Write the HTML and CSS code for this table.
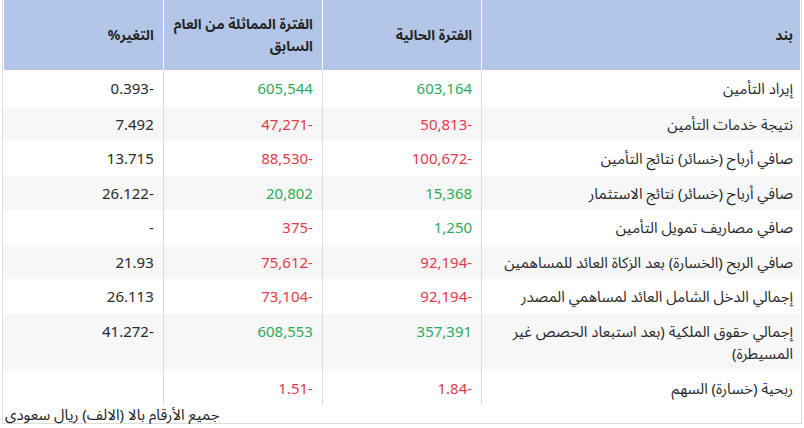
FILE: index.html
```html
<!DOCTYPE html>
<html lang="ar" dir="rtl">
<head>
<meta charset="utf-8">
<title>النتائج المالية</title>
<link rel="stylesheet" href="styles.css">
</head>
<body>
<div class="frame">
  <table class="fin">
    <colgroup>
      <col class="c-item">
      <col class="c-num">
      <col class="c-num">
      <col class="c-num">
    </colgroup>
    <thead>
      <tr>
        <th>بند</th>
        <th>الفترة الحالية</th>
        <th>الفترة المماثلة من العام<br>السابق</th>
        <th>التغير%</th>
      </tr>
    </thead>
    <tbody>
      <tr class="first">
        <td>إيراد التأمين</td>
        <td class="pos">603,164</td>
        <td class="pos">605,544</td>
        <td>-0.393</td>
      </tr>
      <tr>
        <td>نتيجة خدمات التأمين</td>
        <td class="neg">-50,813</td>
        <td class="neg">-47,271</td>
        <td>7.492</td>
      </tr>
      <tr>
        <td>صافي أرباح (خسائر) نتائج التأمين</td>
        <td class="neg">-100,672</td>
        <td class="neg">-88,530</td>
        <td>13.715</td>
      </tr>
      <tr>
        <td>صافي أرباح (خسائر) نتائج الاستثمار</td>
        <td class="pos">15,368</td>
        <td class="pos">20,802</td>
        <td>-26.122</td>
      </tr>
      <tr>
        <td>صافي مصاريف تمويل التأمين</td>
        <td class="pos">1,250</td>
        <td class="neg">-375</td>
        <td>-</td>
      </tr>
      <tr>
        <td>صافي الربح (الخسارة) بعد الزكاة العائد للمساهمين</td>
        <td class="neg">-92,194</td>
        <td class="neg">-75,612</td>
        <td>21.93</td>
      </tr>
      <tr>
        <td>إجمالي الدخل الشامل العائد لمساهمي المصدر</td>
        <td class="neg">-92,194</td>
        <td class="neg">-73,104</td>
        <td>26.113</td>
      </tr>
      <tr>
        <td>إجمالي حقوق الملكية (بعد استبعاد الحصص غير المسيطرة)</td>
        <td class="pos">357,391</td>
        <td class="pos">608,553</td>
        <td>-41.272</td>
      </tr>
      <tr>
        <td>ربحية (خسارة) السهم</td>
        <td class="neg">-1.84</td>
        <td class="neg">-1.51</td>
        <td></td>
      </tr>
    </tbody>
  </table>
  <p class="note">جميع الأرقام بالا (الالف) ريال سعودي</p>
</div>
</body>
</html>
```

FILE: styles.css
```css
html, body {
  margin: 0;
  padding: 0;
  background: #ffffff;
}

body {
  font-family: "Segoe UI", "Noto Sans", "Noto Sans Arabic", "DejaVu Sans", sans-serif;
  color: #2a2a2a;
  font-size: 15px;
}

.frame {
  width: 800px;
  margin: 0 2px;
  box-sizing: border-box;
  border: 1px solid #dcdcdc;
  border-top: 0;
  padding: 0 1px;
  height: 424px;
}

.fin {
  width: 796px;
  border-collapse: collapse;
  table-layout: fixed;
}

.c-item { width: 318px; }
.c-num { width: 159px; }

.fin th {
  background: #b4c6e7;
  height: 70px;
  box-sizing: border-box;
  padding: 0 9px 0 6px;
  text-align: right;
  vertical-align: middle;
  font-weight: bold;
  font-size: 14px;
  line-height: 22px;
  color: #262626;
  white-space: nowrap;
  border-left: 1px solid #ffffff;
}

.fin th:first-child { padding-right: 7px; }

.fin th:last-child { border-left: 0; }

.fin td {
  padding: 6px 9px 6px 8px;
  text-align: right;
  vertical-align: top;
  line-height: 22.5px;
  font-size: 15px;
  border-left: 1px solid #dadada;
}

.fin td:first-child {
  padding-right: 7px;
  font-size: 15px;
}

.fin td:last-child { border-left: 0; }

.fin tr.first td { padding-top: 7px; padding-bottom: 7px; }

.fin tbody tr:nth-child(even) td { background: #f7f7f7; }

.fin td.pos { color: #2eaa5a; }
.fin td.neg { color: #e23b4a; }

.note {
  margin: 0;
  padding: 0 0 0 1px;
  text-align: left;
  font-size: 15px;
  line-height: 18px;
  height: 20px;
  overflow: hidden;
  color: #222;
}
```
